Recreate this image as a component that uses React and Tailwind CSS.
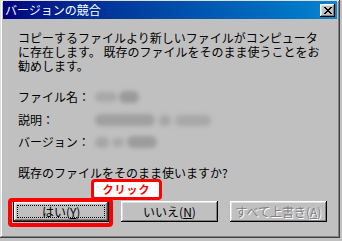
import React from "react";

const F = { fontFamily: '"Noto Sans CJK JP", "Noto Sans", sans-serif' };

function Blob({ w, h = 10, className = "" }) {
  return <div className={`rounded-full blur-[2px] ${className}`} style={{ width: w, height: h }} />;
}

export default function App() {
  return (
    <div className="relative w-[342px] h-[241px] bg-[#c0c0c0] overflow-hidden text-[12px] text-black" style={F}>
      <div className="w-[340px] h-[238px] flex flex-col pt-[1px] px-[3px] shadow-[inset_-1px_-1px_#404040,inset_1px_1px_#dfdfdf,inset_-2px_-2px_#808080,inset_2px_2px_#ffffff]">
        {/* title bar */}
        <div className="h-[18px] flex items-center justify-between pl-[2px] pr-[2px] bg-gradient-to-r from-[#000080] to-[#1084d0]">
          <span className="text-white text-[12px] leading-none">バージョンの競合</span>
          <div className="w-[15px] h-[13px] bg-[#c0c0c0] flex items-center justify-center shadow-[inset_-1px_-1px_#000,inset_1px_1px_#fff,inset_-2px_-2px_#808080,inset_2px_2px_#dfdfdf]">
            <svg width="8" height="7" viewBox="0 0 8 7" shapeRendering="crispEdges">
              <path d="M0 0h2v1H0zM6 0h2v1H6zM1 1h2v1H1zM5 1h2v1H5zM2 2h4v1H2zM3 3h2v1H3zM2 4h4v1H2zM1 5h2v1H1zM5 5h2v1H5zM0 6h2v1H0zM6 6h2v1H6z" fill="#000" />
            </svg>
          </div>
        </div>
        {/* body */}
        <div className="flex flex-col pl-[15px] pr-[10px]">
          <p className="mt-[12px] leading-[14px] w-[305px]">
            コピーするファイルより新しいファイルがコンピュータに存在します。 既存のファイルをそのまま使うことをお勧めします。
          </p>
          <div className="mt-[17px] h-[14px] leading-[14px] flex items-center">
            <span className="w-[77px]">ファイル名：</span>
            <div className="flex items-center gap-[2px]">
              <Blob w={22} h={10} className="bg-[#a8a8a8]" />
              <Blob w={20} h={12} className="bg-[#9a9a9a]" />
            </div>
          </div>
          <div className="mt-[9px] h-[14px] leading-[14px] flex items-center">
            <span className="w-[77px]">説明：</span>
            <div className="flex items-center gap-[4px]">
              <Blob w={60} h={12} className="bg-[#a0a0a0]" />
              <Blob w={12} h={11} className="bg-[#a6a6a6]" />
              <Blob w={36} h={11} className="bg-[#a8a8a8]" />
            </div>
          </div>
          <div className="mt-[8px] h-[14px] leading-[14px] flex items-center">
            <span className="w-[77px]">バージョン：</span>
            <div className="flex items-center gap-[3px]">
              <Blob w={14} h={11} className="bg-[#a6a6a6]" />
              <Blob w={12} h={9} className="bg-[#a8a8a8]" />
              <Blob w={30} h={12} className="bg-[#9c9c9c]" />
            </div>
          </div>
          <p className="mt-[17px] leading-[14px]">既存のファイルをそのまま使いますか?</p>
          <div className="mt-[21px] flex gap-[12px] -ml-[5px]">
            <button className="relative w-[98px] h-[21px] bg-[#c0c0c0] leading-none shadow-[inset_1px_1px_#000,inset_-1px_-1px_#000,inset_-2px_-2px_#404040,inset_2px_2px_#fff,inset_-3px_-3px_#808080,inset_3px_3px_#dfdfdf]">
              <span className="absolute inset-[4px] border border-dotted border-black" />
              はい(<span className="underline">Y</span>)
            </button>
            <button className="w-[98px] h-[21px] bg-[#c0c0c0] leading-none shadow-[inset_-1px_-1px_#000,inset_1px_1px_#fff,inset_-2px_-2px_#808080,inset_2px_2px_#dfdfdf]">
              いいえ(<span className="underline">N</span>)
            </button>
            <button className="w-[99px] h-[21px] bg-[#c0c0c0] leading-none text-[#808080] [text-shadow:1px_1px_#fff] shadow-[inset_-1px_-1px_#000,inset_1px_1px_#fff,inset_-2px_-2px_#808080,inset_2px_2px_#dfdfdf]">
              すべて上書き(<span className="underline">A</span>)
            </button>
          </div>
        </div>
      </div>
      {/* annotation */}
      <div className="absolute left-[8px] top-[198px] w-[105px] h-[29px] border-[4px] border-[#ff0000] rounded-[4px]" />
      <div className="absolute left-[91px] top-[179px] w-[71px] h-[21px] bg-white border-[3px] border-[#ff0000] rounded-[4px] flex items-center justify-center">
        <span className="text-[#ff0000] font-bold text-[11px] leading-none tracking-[1px]">クリック</span>
      </div>
    </div>
  );
}
